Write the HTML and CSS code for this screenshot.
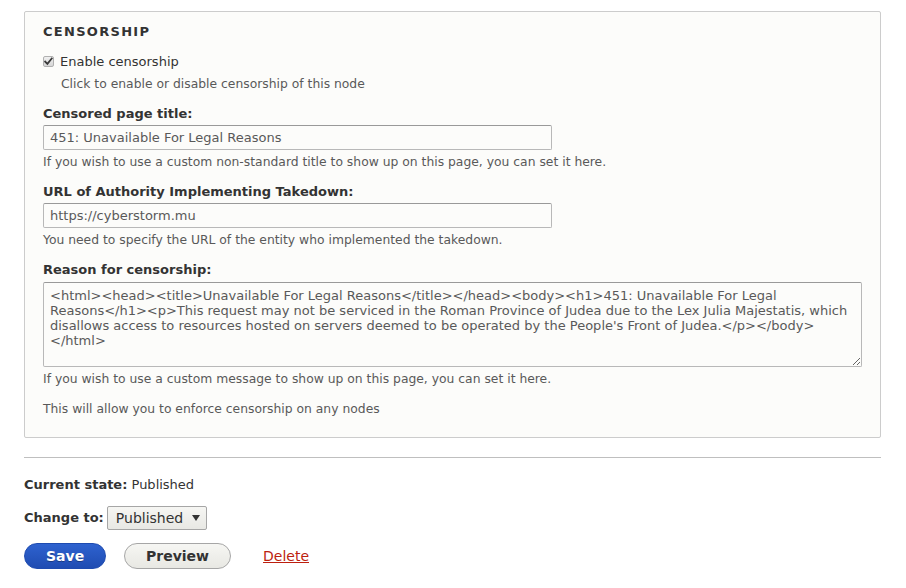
FILE: index.html
```html
<!DOCTYPE html>
<html>
<head>
<meta charset="utf-8">
<link rel="stylesheet" href="styles.css">
</head>
<body>
<div class="page">
  <fieldset class="box">
    <div class="legend">CENSORSHIP</div>
    <div class="check-row">
      <span class="cb"><svg width="11" height="11" viewBox="0 0 11 11"><path d="M2.2 5.6 L4.4 7.9 L8.8 2.4" fill="none" stroke="#3a3a3a" stroke-width="1.8" stroke-linecap="square"/></svg></span>
      <label>Enable censorship</label>
    </div>
    <div class="desc indent">Click to enable or disable censorship of this node</div>

    <div class="field">
      <div class="lbl">Censored page title:</div>
      <input class="text" type="text" value="451: Unavailable For Legal Reasons">
      <div class="desc">If you wish to use a custom non-standard title to show up on this page, you can set it here.</div>
    </div>

    <div class="field">
      <div class="lbl">URL of Authority Implementing Takedown:</div>
      <input class="text" type="text" value="https://cyberstorm.mu">
      <div class="desc">You need to specify the URL of the entity who implemented the takedown.</div>
    </div>

    <div class="field">
      <div class="lbl area-lbl">Reason for censorship:</div>
      <textarea class="area">&lt;html&gt;&lt;head&gt;&lt;title&gt;Unavailable For Legal Reasons&lt;/title&gt;&lt;/head&gt;&lt;body&gt;&lt;h1&gt;451: Unavailable For Legal Reasons&lt;/h1&gt;&lt;p&gt;This request may not be serviced in the Roman Province of Judea due to the Lex Julia Majestatis, which disallows access to resources hosted on servers deemed to be operated by the People's Front of Judea.&lt;/p&gt;&lt;/body&gt;&lt;/html&gt;</textarea>
      <div class="desc">If you wish to use a custom message to show up on this page, you can set it here.</div>
    </div>

    <div class="desc foot">This will allow you to enforce censorship on any nodes</div>
  </fieldset>

  <div class="state">
    <div class="row"><b>Current state:</b> Published</div>
    <div class="row change"><b>Change to:</b>
      <span class="select">Published <span class="arrow"></span></span>
    </div>
    <div class="actions">
      <button class="btn primary">Save</button>
      <button class="btn">Preview</button>
      <a class="delete" href="#">Delete</a>
    </div>
  </div>
</div>
</body>
</html>
```
FILE: styles.css
```css
html, body {
  margin: 0;
  padding: 0;
  background: #fff;
}
body {
  font-family: "DejaVu Sans", sans-serif;
  font-size: 13px;
  color: #333;
}
.page {
  padding: 11px 25px 0 24px;
}
.box {
  margin: 0;
  border: 1px solid #ccc;
  border-radius: 2px;
  background: #fcfcfa;
  padding: 12px 18px 20px 18px;
  min-width: 0;
}
.legend {
  font-weight: bold;
  font-size: 13px;
  letter-spacing: 1.3px;
  color: #333;
  line-height: 16px;
}
.check-row {
  display: flex;
  align-items: center;
  margin-top: 13px;
  line-height: 18px;
}
.cb {
  display: inline-flex;
  box-sizing: border-box;
  width: 11px;
  height: 11px;
  margin: -2px 6px 0 0;
  border: 1px solid #b0b0b0;
  border-radius: 2px;
  background: linear-gradient(#f0f0f0, #d6d6d6);
  overflow: hidden;
}
.cb svg {
  margin: -1px;
}
.desc {
  font-size: 12.35px;
  color: #595959;
  line-height: 16px;
  margin-top: 4px;
}
.indent {
  margin-left: 18px;
  margin-top: 5px;
}
.field {
  margin-top: 13px;
}
.lbl {
  font-weight: bold;
  line-height: 18px;
  margin-bottom: 2px;
}
.area-lbl {
  margin-bottom: 3px;
}
.text {
  display: block;
  box-sizing: border-box;
  width: 509px;
  height: 25px;
  border: 1px solid #b8b8b8;
  border-top-color: #999;
  border-radius: 2px;
  background: #fcfcfa;
  font-family: "DejaVu Sans", sans-serif;
  font-size: 13px;
  color: #595959;
  padding: 0 6px;
  margin: 0;
}
.area {
  display: block;
  box-sizing: border-box;
  width: 819px;
  height: 85px;
  border: 1px solid #b8b8b8;
  border-top-color: #999;
  border-radius: 2px;
  background: #fcfcfa;
  font-family: "DejaVu Sans", sans-serif;
  font-size: 13px;
  line-height: 15px;
  color: #595959;
  padding: 5px 6px;
  margin: 0;
  resize: vertical;
}
.foot {
  margin-top: 14px;
}
.state {
  border-top: 1px solid #bfbfbf;
  margin-top: 19px;
  padding-top: 18px;
}
.row {
  line-height: 18px;
}
.row b {
  font-weight: bold;
}
.change {
  margin-top: 12px;
  display: flex;
  align-items: center;
}
.select {
  display: inline-flex;
  align-items: center;
  box-sizing: border-box;
  height: 24px;
  margin-left: 3px;
  padding: 0 6px 0 8px;
  border: 1px solid #a6a6a6;
  border-radius: 2px;
  background: linear-gradient(#f6f6f3, #e8e8e4);
  font-size: 14px;
  color: #333;
}
.arrow {
  display: inline-block;
  width: 0;
  height: 0;
  margin-left: 9px;
  border-left: 4px solid transparent;
  border-right: 4px solid transparent;
  border-top: 6px solid #333;
}
.actions {
  margin-top: 13px;
  display: flex;
  align-items: center;
}
.btn {
  box-sizing: border-box;
  height: 26px;
  border: 1px solid #a6a6a6;
  border-radius: 20px;
  background: linear-gradient(#f6f6f3, #e8e8e3);
  font-family: "DejaVu Sans", sans-serif;
  font-weight: bold;
  font-size: 14px;
  color: #333;
  padding: 0 21px;
  margin: 0 18px 0 0;
}
.btn.primary {
  width: 82px;
  background: linear-gradient(#2e62cf, #1f4cb2);
  border-color: #1e4bb0;
  color: #fff;
  text-shadow: 0 1px 0 rgba(0,0,0,0.3);
}
.delete {
  margin-left: 14px;
  color: #bc1f0f;
  font-size: 14px;
  text-decoration: underline;
}
```
